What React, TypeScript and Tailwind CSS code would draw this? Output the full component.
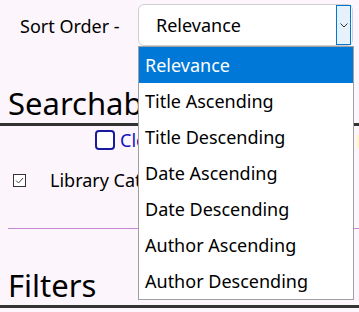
const options = [
  "Relevance",
  "Title Ascending",
  "Title Descending",
  "Date Ascending",
  "Date Descending",
  "Author Ascending",
  "Author Descending",
];

const font = { fontFamily: '"Noto Sans", "Open Sans", sans-serif' };

export default function App() {
  return (
    <div
      className="relative h-[312px] w-[359px] overflow-hidden bg-[#fcf5fc] text-black"
      style={font}
    >
      {/* Sort row */}
      <div className="flex h-[50px] items-start">
        <span className="ml-[20px] mt-[14px] text-[18px] leading-[24px]">Sort Order -</span>
        <div className="ml-auto mr-[6px] mt-[4px] flex h-[42px] w-[215px] items-center rounded-md border border-[#d0d0d0] bg-white">
          <span className="ml-[17px] flex-1 text-[18px]">Relevance</span>
          <span className="mr-[1px] flex h-[40px] w-[15px] items-center justify-center border border-[#0078d7] bg-[#e5f1fb]">
            <svg width="8" height="5" viewBox="0 0 8 5" fill="none">
              <path d="M0.5 0.5 L4 4 L7.5 0.5" stroke="#333" strokeWidth="1" />
            </svg>
          </span>
        </div>
      </div>

      {/* Searchable heading */}
      <h2 className="ml-[8px] mt-[34px] whitespace-nowrap text-[31px] leading-[38px]">Searchable Fields</h2>
      <div className="mt-[1px] h-[3px] bg-[#333]" />

      <div className="mt-[4px] flex h-[20px] items-center pl-[95px]">
        <span className="h-[20px] w-[20px] rounded-[4px] border-2 border-[#1a1aa0] bg-white" />
        <span className="ml-[5px] text-[18px] leading-[20px] text-[#1010c0]">Clear All</span>
      </div>

      <div className="mt-[18px] flex h-[24px] items-center">
        <span className="ml-[13px] flex h-[13px] w-[13px] items-center justify-center border border-[#333] bg-white">
          <svg width="9" height="7" viewBox="0 0 9 7" fill="none">
            <path d="M1 3.5 L3.5 6 L8 1" stroke="#444" strokeWidth="1" />
          </svg>
        </span>
        <span className="ml-[24px] whitespace-nowrap text-[18px] leading-[24px]">Library Catalog</span>
      </div>

      <div className="ml-[8px] mt-[36px] h-px bg-[#c488d4]" />

      <h2 className="ml-[8px] mt-[37px] text-[31px] leading-[39px]">Filters</h2>
      <div className="h-[3px] bg-[#333]" />

      {/* yellow edge hint */}
      <div className="absolute left-[357px] top-[135px] h-[13px] w-[2px] bg-[#fff6c0]" />

      {/* Open dropdown list */}
      <ul className="absolute left-[138px] top-[46px] w-[216px] border border-[#a0a0a0] bg-white">
        {options.map((o, i) => (
          <li
            key={o}
            className={
              i === 0
                ? "flex h-[36px] items-center bg-[#0078d7] pl-[6px] text-[18px] text-white"
                : "flex h-[36px] items-center pl-[6px] text-[18px] text-black"
            }
          >
            {o}
          </li>
        ))}
      </ul>
    </div>
  );
}
